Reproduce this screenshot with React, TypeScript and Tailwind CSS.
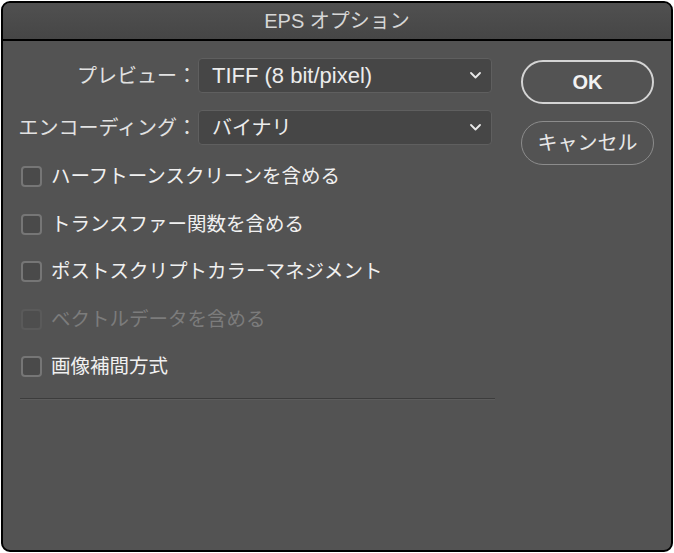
import React from 'react';

const FONT = { fontFamily: '"Liberation Sans", "Noto Sans CJK JP", sans-serif' };

const Chevron = () => (
    <svg width="11" height="7" viewBox="0 0 11 7" fill="none" stroke="#e8e8e8" strokeWidth={1.8}>
        <path d="M1 1l4.5 4.5L10 1" strokeLinecap="round" strokeLinejoin="round" />
    </svg>
);

const SelectRow = ({ label, value, latin }: { label: string; value: string; latin?: boolean }) => (
    <div className="flex items-center h-[35px]">
        <div className="w-[195px] text-right text-[20px] text-[#e2e2e2] pr-[1px] leading-none">{label}</div>
        <div className="w-[294px] h-full flex items-center justify-between rounded-[4px] border border-[#5f5f5f] bg-[#464646] pl-[13px] pr-[10px]">
            <span className={`${latin ? 'text-[22px]' : 'text-[20px]'} text-[#ececec] leading-none`}>{value}</span>
            <Chevron />
        </div>
    </div>
);

const CheckRow = ({ label, disabled = false }: { label: string; disabled?: boolean }) => (
    <div className="flex items-center h-[47.5px] pl-[18px] gap-[9px]">
        <div
            className={`w-[21px] h-[21px] rounded-[4px] border-2 ${
                disabled ? 'border-[#5a5a5a] bg-[#4e4e4e]' : 'border-[#767676] bg-[#4a4a4a]'
            }`}
        />
        <span className={`text-[19.5px] leading-none ${disabled ? 'text-[#7c7c7c]' : 'text-[#f0f0f0]'}`}>{label}</span>
    </div>
);

export default function App() {
    return (
        <div className="w-[674px] h-[553px] bg-white p-[1px]" style={FONT}>
            <div className="h-full flex flex-col rounded-[9px] border-2 border-black overflow-hidden bg-[#535353]">
                <div className="h-[38px] shrink-0 flex items-center justify-center bg-gradient-to-b from-[#505050] to-[#464646] border-b-2 border-black">
                    <span className="text-[20px] text-[#d6d6d6] leading-none">EPS オプション</span>
                </div>
                <div className="flex-1 flex pt-[17px]">
                    <div className="w-[489px] flex flex-col">
                        <SelectRow label="プレビュー：" value="TIFF (8 bit/pixel)" latin />
                        <div className="h-[17px]" />
                        <SelectRow label="エンコーディング：" value="バイナリ" />
                        <div className="mt-[8px] flex flex-col">
                            <CheckRow label="ハーフトーンスクリーンを含める" />
                            <CheckRow label="トランスファー関数を含める" />
                            <CheckRow label="ポストスクリプトカラーマネジメント" />
                            <CheckRow label="ベクトルデータを含める" disabled />
                            <CheckRow label="画像補間方式" />
                        </div>
                        <div className="mt-[7px] ml-[17px] w-[475px] h-[1px] bg-[#3c3c3c] shadow-[0_1px_0_#5c5c5c]" />
                    </div>
                    <div className="ml-[29px] w-[133px] flex flex-col gap-[17px] pt-[2px]">
                        <button className="h-[44px] rounded-full border-2 border-[#d4d4d4] text-[20px] font-bold text-[#f2f2f2]">
                            OK
                        </button>
                        <button className="h-[44px] rounded-full border-[1.5px] border-[#8c8c8c] text-[20px] text-[#e8e8e8]">
                            キャンセル
                        </button>
                    </div>
                </div>
            </div>
        </div>
    );
}
